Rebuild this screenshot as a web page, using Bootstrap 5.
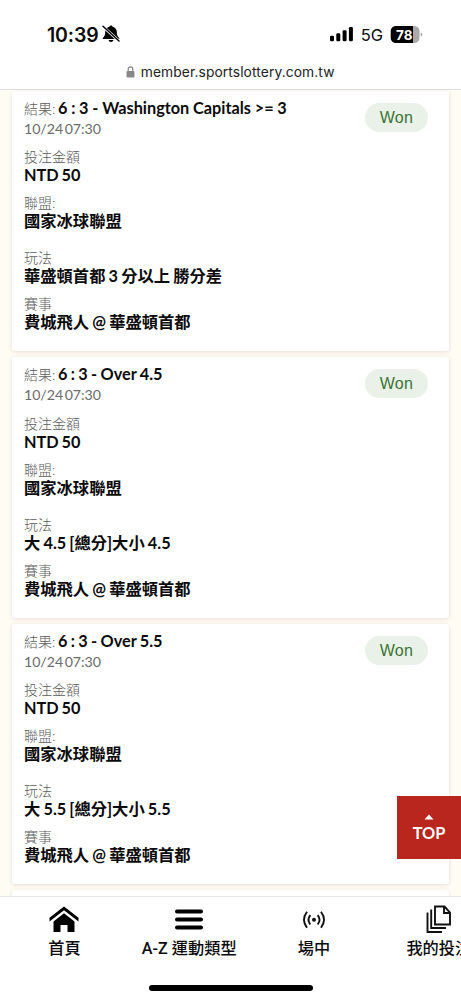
<!DOCTYPE html>
<html lang="zh-Hant">
<head>
<meta charset="utf-8">
<meta name="viewport" content="width=device-width, initial-scale=1">
<title>我的投注</title>
<link href="https://cdn.jsdelivr.net/npm/bootstrap@5.3.0/dist/css/bootstrap.min.css" rel="stylesheet">
<style>
html,body{height:1000px;overflow:hidden}
body{background:#fffcf4;font-family:Lato,"Noto Sans CJK TC",sans-serif;color:#0b0b0b}
.phone-head{height:90px;border-bottom:1px solid #dedede;font-family:Inter,sans-serif}
.status-row{height:57px;padding:13px 38px 0 47px}
.clock{font-size:19.5px;font-weight:600;line-height:20px;letter-spacing:-.15px;padding-top:4px}
.net{font-size:16.5px;line-height:20px;padding-top:4px;margin-left:7px;margin-right:7px}
.url-row{height:30px;font-size:13.8px;line-height:30px;letter-spacing:.1px;color:#222}
.bets{height:806px;padding:.5px 12px 0;gap:6px}
.bet-card{height:260.5px;flex:none;padding:7px 12px 0;border:0;border-radius:3px;box-shadow:0 1px 4px rgba(90,65,40,.15)}
.line-a{line-height:20px;height:20px;font-size:16.3px;white-space:nowrap}
.line-a .cap{margin-right:-1.6px}
.line-a b{word-spacing:-.2px}
.line-a.tight b{word-spacing:-.6px}
.date{line-height:20px;height:21px;margin-bottom:9.5px;font-size:14.2px;color:#6c6c6c;padding-top:1px;word-spacing:-2px;letter-spacing:-.05px}
.cap{font-size:14px;line-height:18px;height:18px;color:#5c5c5c;font-weight:300}
.val{font-size:16.3px;line-height:18px;height:18px;font-weight:700;white-space:nowrap;color:#0b0b0b;word-spacing:-.8px}
.val.money{word-spacing:-1.2px}
.item{margin-bottom:10px}
.item.wide{margin-bottom:19px}
.won{top:12px;right:21px;width:63px;height:29px;border-radius:15px;background:#e9f1e9;color:#3b7433;font:400 16px/30px "Liberation Sans",sans-serif;text-align:center;letter-spacing:.3px}
.top-btn{left:397px;top:796px;width:64px;height:63px;background:#b8261e;color:#fff;border:0;padding:18px 0 0;border-radius:0;font-size:16.3px;line-height:18px;font-weight:700}
.top-btn:hover{background:#b8261e;color:#fff}
.tabbar{height:104px;border-top:1px solid #e8e8e8}
.tabs{width:502px;height:64px;margin-left:2px}
.tab{width:124.8px;font-family:Roboto,"Noto Sans CJK TC",sans-serif;font-size:16.2px;font-weight:500;line-height:20px;color:#0b0b0b;white-space:nowrap;padding-top:8px}
.tab svg{height:30px;margin-bottom:4px}
.home-bar{width:164px;height:6px;border-radius:3px;background:#000;margin-top:24px}
</style>
</head>
<body>
<header class="phone-head bg-white position-relative z-1">
  <div class="status-row d-flex align-items-start">
    <span class="clock me-1 mt-2">10:39</span>
    <svg class="mt-2" width="18" height="26" viewBox="0 0 18 24"><path d="M9 3.500c-.9 0-1.500.600-1.600 1.300C4.500 5.500 3.200 7.500 3.200 10c0 3.200-.8 4.500-2.200 5.700-.7.600-.4 1.300.300 1.300h15.400c.7 0 1-.7.300-1.300-1.400-1.200-2.200-2.500-2.200-5.700 0-2.500-1.300-4.500-4.200-5.200C10.500 4.100 9.900 3.500 9 3.500zM6.500 18a2.600 2.600 0 0 0 5 0z"/><path d="M1 4.500 17 19" stroke="#fff" stroke-width="3"/><path d="M1 4.300 17 19" stroke="#000" stroke-width="1.500" stroke-linecap="round"/></svg>
    <svg class="ms-auto mt-2" width="24" height="24" viewBox="0 0 24 24"><rect x="0" y="14.800" width="4" height="5.400" rx="1.200"/><rect x="6.300" y="12.300" width="4" height="7.900" rx="1.200"/><rect x="12.600" y="9.300" width="4" height="10.900" rx="1.200"/><rect x="18.900" y="6" width="4" height="14.200" rx="1.200"/></svg>
    <span class="net mt-2">5G</span>
    <svg class="mt-2" width="33" height="28" viewBox="0 0 33 28"><path d="M23 5h1.500c2.700 0 5 2.300 5 5v7c0 2.700-2.300 5-5 5H23zM30.700 11.500q1.700.500 1.700 2t-1.700 2z" fill="#aaa"/><path d="M6 5h17v17H6c-3 0-5.300-2.300-5.300-5v-7c0-2.700 2.300-5 5.300-5z"/><text x="14.300" y="18.500" fill="#fff" font-family="Inter,sans-serif" font-size="13.500" font-weight="700" text-anchor="middle">78</text></svg>
  </div>
  <div class="url-row d-flex justify-content-center align-items-center">
    <svg width="9" height="12" viewBox="0 0 9 12" class="me-1"><rect x=".5" y="5" width="8" height="6.500" rx="1" fill="#888"/><path d="M2.200 5V3.200a2.300 2.300 0 0 1 4.600 0V5" fill="none" stroke="#888" stroke-width="1.200"/></svg>
    <span class="text-nowrap">&#8202;member.sportslottery.com.tw</span>
  </div>
</header>

<main class="bets d-flex flex-column overflow-hidden">
  <article class="card bet-card">
    <span class="won position-absolute">Won</span>
    <div class="line-a"><span class="cap">結果:</span> <b>6 : 3 - Washington Capitals &gt;= 3</b></div>
    <div class="date">10/24 07:30</div>
    <div class="item"><div class="cap">投注金額</div><div class="val money">NTD 50</div></div>
    <div class="item wide"><div class="cap">聯盟:</div><div class="val">國家冰球聯盟</div></div>
    <div class="item"><div class="cap">玩法</div><div class="val">華盛頓首都 3 分以上 勝分差</div></div>
    <div><div class="cap">賽事</div><div class="val">費城飛人 @ 華盛頓首都</div></div>
  </article>
  <article class="card bet-card">
    <span class="won position-absolute">Won</span>
    <div class="line-a tight"><span class="cap">結果:</span> <b>6 : 3 - Over 4.5</b></div>
    <div class="date">10/24 07:30</div>
    <div class="item"><div class="cap">投注金額</div><div class="val money">NTD 50</div></div>
    <div class="item wide"><div class="cap">聯盟:</div><div class="val">國家冰球聯盟</div></div>
    <div class="item"><div class="cap">玩法</div><div class="val">大 4.5 [總分]大小 4.5</div></div>
    <div><div class="cap">賽事</div><div class="val">費城飛人 @ 華盛頓首都</div></div>
  </article>
  <article class="card bet-card">
    <span class="won position-absolute">Won</span>
    <div class="line-a tight"><span class="cap">結果:</span> <b>6 : 3 - Over 5.5</b></div>
    <div class="date">10/24 07:30</div>
    <div class="item"><div class="cap">投注金額</div><div class="val money">NTD 50</div></div>
    <div class="item wide"><div class="cap">聯盟:</div><div class="val">國家冰球聯盟</div></div>
    <div class="item"><div class="cap">玩法</div><div class="val">大 5.5 [總分]大小 5.5</div></div>
    <div><div class="cap">賽事</div><div class="val">費城飛人 @ 華盛頓首都</div></div>
  </article>
  <div class="card bet-card"></div>
</main>

<button class="btn top-btn position-fixed d-flex flex-column align-items-center">
  <svg width="10" height="6" viewBox="0 0 10 6" class="mb-1"><path d="M5 .5 9.500 5.500H.5z" fill="#fff"/></svg>TOP
</button>

<footer class="tabbar bg-white overflow-hidden">
  <nav class="tabs d-flex">
    <div class="tab d-flex flex-column align-items-center flex-shrink-0">
      <svg width="30" height="30" viewBox="0 0 30 30"><path d="M15 1.500 29.500 12.800v3.600L15 5.200.5 16.400v-3.600z"/><path d="M15 8.200 25.500 16.500V27h-7v-7h-7v7h-7V16.500z"/></svg>首頁
    </div>
    <div class="tab d-flex flex-column align-items-center flex-shrink-0">
      <svg width="30" height="30" viewBox="0 0 30 30"><path d="M3 6.500h24M3 14.500h24M3 22.500h24" stroke="#000" stroke-width="4" stroke-linecap="round"/></svg><span>A-Z 運動類型</span>
    </div>
    <div class="tab d-flex flex-column align-items-center flex-shrink-0">
      <svg width="30" height="30" viewBox="0 0 30 30" fill="none" stroke="#111" stroke-width="1.900"><circle cx="15" cy="14.800" r="2" fill="#111" stroke="none"/><path d="M11.300 10.100q-3.600 4.700 0 9.400M18.700 10.100q3.600 4.700 0 9.400M8 6.800q-6 8 0 16M22 6.800q6 8 0 16"/></svg>場中
    </div>
    <div class="tab d-flex flex-column align-items-center flex-shrink-0">
      <svg width="30" height="30" viewBox="0 0 30 30" fill="none" stroke="#111" stroke-width="1.900"><path d="M11 1.500h9.500l5.500 6v12H11zM20 1.500V8h6M7.200 4.500V23H22M3.500 7.500V27H18"/></svg>我的投注
    </div>
  </nav>
  <div class="home-bar mx-auto"></div>
</footer>
<script src="https://cdn.jsdelivr.net/npm/bootstrap@5.3.0/dist/js/bootstrap.bundle.min.js"></script>
</body>
</html>
